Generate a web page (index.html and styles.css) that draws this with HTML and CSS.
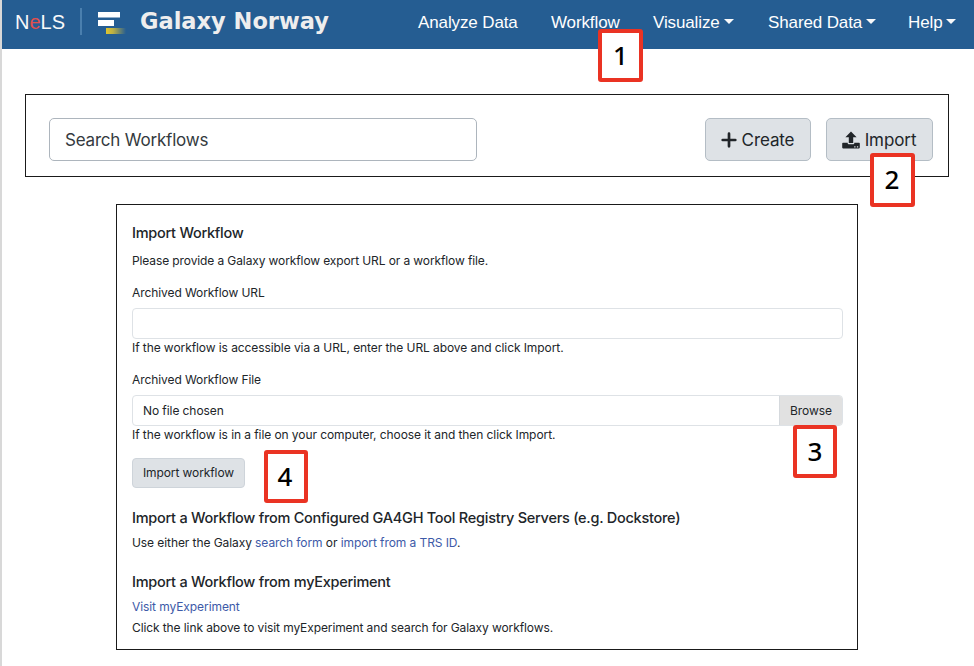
FILE: index.html
```html
<!DOCTYPE html>
<html lang="en">
<head>
<meta charset="utf-8">
<title>Galaxy Norway</title>
<link rel="stylesheet" href="styles.css">
</head>
<body>
<div class="page">
  <header class="masthead">
    <span class="nels">N<span class="nels-e">e</span>LS</span>
    <span class="divider"></span>
    <svg class="logo" width="30" height="26" viewBox="0 0 30 26">
      <defs><linearGradient id="fade"><stop offset="0" stop-color="#dfc52f"/><stop offset=".35" stop-color="#bcb044"/><stop offset="1" stop-color="#255d92"/></linearGradient></defs>
      <path fill="#fff" d="M0 1h22v5.5H0zM0 9h16v6H0z"/>
      <path fill="url(#fade)" d="M8 17h20v6H8z"/>
    </svg>
    <span class="brand">Galaxy Norway</span>
    <nav class="menu">
      <a class="item analyze">Analyze Data</a>
      <a class="item workflow">Workflow<span class="badge b1">1</span></a>
      <a class="item visualize">Visualize<i class="caret"></i></a>
      <a class="item shared">Shared Data<i class="caret"></i></a>
      <a class="item help-menu">Help<i class="caret"></i></a>
    </nav>
  </header>

  <section class="toolbar">
    <div class="search">Search Workflows</div>
    <div class="actions">
      <button class="btn create"><svg width="16" height="16" viewBox="0 0 16 16"><path d="M8 1.7v12.6M1.7 8h12.6" stroke="#212529" stroke-width="2.7" stroke-linecap="round"/></svg><span>Create</span></button>
      <button class="btn import"><svg width="18" height="18" viewBox="0 0 18 18"><path fill="#212529" fill-rule="evenodd" d="M9 0.5L14.6 6.2H11.2V12H6.8V6.2H3.4zM1 11.8H5.7V12.2Q5.7 13.2 6.7 13.2H11.3Q12.3 13.2 12.3 12.2V11.8H17Q17.8 11.8 17.8 12.6V16.6Q17.8 17.4 17 17.4H1Q.2 17.4 .2 16.6V12.6Q.2 11.8 1 11.8zM12.2 15.2h1.3v1.2h-1.3zM14.9 15.2h1.3v1.2h-1.3z"/></svg><span>Import</span></button>
      <span class="badge b2">2</span>
    </div>
  </section>

  <main class="panel">
    <h2 class="h-import">Import Workflow</h2>
    <p class="intro">Please provide a Galaxy workflow export URL or a workflow file.</p>
    <div class="label l-url">Archived Workflow URL</div>
    <div class="field"></div>
    <p class="hint-url">If the workflow is accessible via a URL, enter the URL above and click Import.</p>
    <div class="label l-file">Archived Workflow File</div>
    <div class="field file"><span class="chosen">No file chosen</span><span class="browse">Browse</span><span class="badge b3">3</span></div>
    <p class="hint-file">If the workflow is in a file on your computer, choose it and then click Import.</p>
    <div class="submit-row"><button class="submit">Import workflow</button><span class="badge b4">4</span></div>
    <h2 class="h-trs">Import a Workflow from Configured GA4GH Tool Registry Servers (e.g. Dockstore)</h2>
    <p class="trs">Use either the Galaxy <a>search form</a> or <a>import from a TRS ID</a>.</p>
    <h2 class="h-my">Import a Workflow from myExperiment</h2>
    <p class="visit"><a>Visit myExperiment</a></p>
    <p class="click">Click the link above to visit myExperiment and search for Galaxy workflows.</p>
  </main>
</div>
</body>
</html>
```
FILE: styles.css
```css
* { box-sizing: border-box; }
body { margin: 0; background: #fff; font-family: Inter, "Liberation Sans", sans-serif; color: #212529; }
.page { width: 974px; height: 666px; border-left: 2px solid #d8d8d8; overflow: hidden; white-space: nowrap; }
h2, p { margin: 0; }
button { font-family: inherit; color: inherit; margin: 0; }

.masthead { height: 49px; background: #255d92; display: flex; align-items: flex-start; color: #f8f9fa; }
.nels { width: 64px; padding-left: 13px; margin-top: 10px; font: 20px/24px "Liberation Sans", sans-serif; }
.nels-e { color: #e2504d; }
.divider { width: 2px; height: 27px; margin: 8px 16px 0 14px; background: #4a7fae; }
.logo { margin-top: 11px; }
.brand { width: 200px; margin: 7px 0 0 12px; font: bold 22.5px/28px "DejaVu Sans", sans-serif; color: #eee; }
.menu { display: flex; margin: 11px 0 0 78px; font: 17px/23px "Liberation Sans", sans-serif; letter-spacing: -0.12px; }
.item { position: relative; flex: none; color: #fff; }
.analyze { width: 133px; }
.workflow { width: 102px; }
.visualize { width: 115px; }
.shared { width: 140px; }
.caret { display: inline-block; margin-left: 4px; vertical-align: 4px; border: 5px solid transparent; border-top-color: #f8f9fa; border-bottom: 0; }

.badge { position: absolute; width: 45px; height: 53px; border: 4px solid #ea3323; border-radius: 3px; background: #fff; color: #000; font: 500 26px/44px "Noto Sans", sans-serif; letter-spacing: 0; text-align: center; z-index: 2; }
.b1 { left: 47px; top: 18px; }
.b2 { right: 18px; top: 35px; height: 54px; padding-right: 1px; }
.b3 { right: 5px; top: 29px; width: 44px; }
.b4 { left: 132px; top: -8px; width: 44px; padding-right: 2px; }

.toolbar { margin: 45px 0 0 23px; width: 924px; height: 83px; border: 1px solid #1a1a1a; padding: 23px 15px 0 23px; display: flex; justify-content: space-between; }
.search { width: 428px; height: 43px; border: 1px solid #adb5bd; border-radius: 5px; padding-left: 15px; font-size: 17px; line-height: 42px; letter-spacing: -0.2px; color: #343a40; }
.actions { position: relative; display: flex; gap: 15px; }
.btn { height: 43px; border: 1px solid #b4bdc5; border-radius: 5px; background: #dee2e6; padding: 0; font-size: 17px; line-height: 41px; letter-spacing: -0.1px; display: flex; align-items: center; justify-content: center; gap: 5px; }
.btn span { padding-top: 1px; }
.create { width: 106px; padding-right: 1px; }
.import { width: 107px; padding-right: 1px; }

.panel { margin: 27px 0 0 114px; width: 742px; height: 446px; border: 1px solid #1a1a1a; padding: 18px 14px 0 15px; font-size: 12px; line-height: 18px; letter-spacing: -0.08px; }
.panel h2 { font-size: 14.5px; line-height: 20px; font-weight: 550; letter-spacing: -0.26px; }
.intro { margin-top: 9px; letter-spacing: -0.11px; }
.label { margin-top: 14px; }
.field { margin-top: 6px; height: 31px; border: 1px solid #dee2e6; border-radius: 4px; }
.file { position: relative; display: flex; justify-content: space-between; line-height: 29px; }
.chosen { padding-left: 10px; }
.browse { width: 63px; background: #e1e1e1; border-left: 1px solid #d5d9dd; border-radius: 0 3px 3px 0; text-align: center; }
.submit-row { position: relative; height: 30px; margin-top: 14px; }
.submit { width: 113px; height: 30px; border: 1px solid #ced4da; border-radius: 4px; background: #dee2e6; padding: 0; font-size: 12px; line-height: 28px; letter-spacing: -0.1px; }
.panel .h-trs, .panel .h-my { margin-top: 20px; }
.trs, .visit { margin-top: 6px; }
.click { margin-top: 3px; letter-spacing: -0.1px; }
.panel a { color: #3d5aa8; }
```
